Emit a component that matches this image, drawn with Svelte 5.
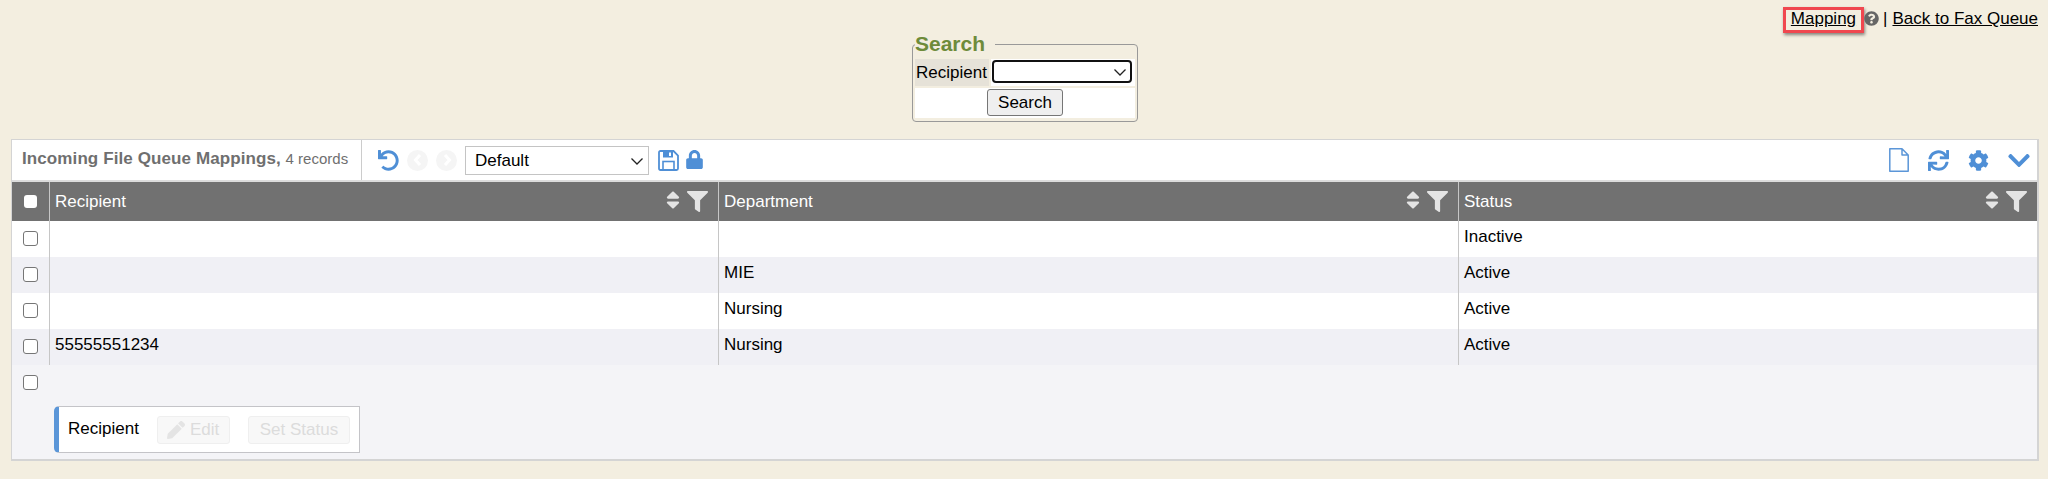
<script lang="ts">
  // Incoming file queue mappings grid
  const rows = [
    { recipient: '', department: '', status: 'Inactive' },
    { recipient: '', department: 'MIE', status: 'Active' },
    { recipient: '', department: 'Nursing', status: 'Active' },
    { recipient: '55555551234', department: 'Nursing', status: 'Active' },
  ];
  const columns = ['Recipient', 'Department', 'Status'];
</script>

<div class="page">
  <div class="top-links">
    <a class="mapping" href="#m">Mapping</a>
    <svg class="help" viewBox="0 0 512 512" width="15" height="15">
      <path fill="#666" d="M504 256c0 136.997-111.043 248-248 248S8 392.997 8 256C8 119.083 119.043 8 256 8s248 111.083 248 248zM262.655 90c-54.497 0-89.255 22.957-116.549 63.758-3.536 5.286-2.353 12.415 2.715 16.258l34.699 26.31c5.205 3.947 12.621 3.008 16.665-2.122 17.864-22.658 30.113-35.797 57.303-35.797 20.429 0 45.698 13.148 45.698 32.958 0 14.976-12.363 22.667-32.534 33.976C247.128 238.528 216 254.941 216 296v4c0 6.627 5.373 12 12 12h56c6.627 0 12-5.373 12-12v-1.333c0-28.462 83.186-29.647 83.186-106.667 0-58.002-60.165-102-116.531-102zM256 338c-25.365 0-46 20.635-46 46 0 25.364 20.635 46 46 46s46-20.636 46-46c0-25.365-20.635-46-46-46z" />
    </svg>
    <span class="sep">|</span>
    <a href="#b">Back to Fax Queue</a>
  </div>

  <div class="search-wrap">
    <fieldset class="search">
      <legend>Search</legend>
      <div class="search-row">
        <span class="label">Recipient</span>
        <span class="field">
          <span class="select-wrap">
            <select class="recipient"><option></option></select>
            <svg class="chevron" viewBox="0 0 12 7" width="12" height="7"><path d="M0.5 0.5 L6 6 L11.5 0.500" fill="none" stroke="#222" stroke-width="1.300" /></svg>
          </span>
        </span>
      </div>
      <div class="search-btn-row"><button>Search</button></div>
    </fieldset>
  </div>

  <div class="grid">
    <div class="toolbar">
      <div class="title"><b>Incoming File Queue Mappings,</b> <span>4 records</span></div>
      <div class="tools">
        <svg class="undo" viewBox="0 0 512 512" width="21" height="21">
          <path fill="#4f8fd6" d="M212.333 224.333H12c-6.627 0-12-5.373-12-12V12C0 5.373 5.373 0 12 0h48c6.627 0 12 5.373 12 12v78.112C117.773 39.279 184.26 7.47 258.175 8.007c136.906.994 246.448 111.623 246.157 248.532C504.041 393.258 393.12 504 256.333 504c-64.089 0-122.496-24.313-166.51-64.215-5.099-4.622-5.334-12.554-.467-17.42l33.967-33.967c4.474-4.474 11.662-4.717 16.401-.525C170.76 415.336 211.58 432 256.333 432c97.268 0 176-78.716 176-176 0-97.267-78.716-176-176-176-58.496 0-110.28 28.476-142.274 72.333h98.274c6.627 0 12 5.373 12 12v48c0 6.627-5.373 12-12 12z" />
        </svg>
        <span class="nav"><svg viewBox="0 0 20 20" width="20" height="20"><path d="M12 5 L7.500 10 L12 15" fill="none" stroke="#fff" stroke-width="3" /></svg></span>
        <span class="nav"><svg viewBox="0 0 20 20" width="20" height="20"><path d="M8 5 L12.500 10 L8 15" fill="none" stroke="#fff" stroke-width="3" /></svg></span>
        <span class="select-wrap view-wrap">
          <select class="view"><option>Default</option></select>
          <svg class="chevron" viewBox="0 0 12 7" width="12" height="7"><path d="M0.5 0.5 L6 6 L11.5 0.500" fill="none" stroke="#222" stroke-width="1.300" /></svg>
        </span>
        <svg class="save" viewBox="0 0 21 21" width="21" height="21">
          <path d="M1 2.500 Q1 1 2.500 1 H15.500 L20 5.500 V18.500 Q20 20 18.500 20 H2.500 Q1 20 1 18.500 Z" fill="none" stroke="#4f8fd6" stroke-width="1.800" />
          <rect x="5" y="1" width="10" height="6.500" fill="#4f8fd6" />
          <rect x="11" y="2.500" width="2" height="3.500" fill="#fff" />
          <rect x="5" y="11.500" width="11" height="8.500" fill="none" stroke="#4f8fd6" stroke-width="1.600" />
        </svg>
        <svg class="lock" viewBox="0 0 448 512" width="17" height="19">
          <path fill="#4f8fd6" d="M400 224h-24v-72C376 68.200 307.800 0 224 0S72 68.200 72 152v72H48c-26.500 0-48 21.500-48 48v192c0 26.500 21.500 48 48 48h352c26.500 0 48-21.500 48-48V272c0-26.500-21.500-48-48-48zm-104 0H152v-72c0-39.700 32.300-72 72-72s72 32.300 72 72v72z" />
        </svg>
      </div>
      <div class="right-tools">
        <svg viewBox="0 0 20 24" width="20" height="24">
          <path d="M0.800 0.800 H13 L19.200 7 V23.200 H0.800 Z M13 0.800 V7 H19.200" fill="none" stroke="#5b96d8" stroke-width="1.500" stroke-linejoin="round" />
        </svg>
        <svg viewBox="0 0 512 512" width="21" height="21">
          <path fill="#4f8fd6" d="M440.65 12.57l4 82.77A247.16 247.16 0 0 0 255.83 8C134.73 8 33.91 94.92 12.29 209.82A12 12 0 0 0 24.09 224h49.05a12 12 0 0 0 11.67-9.26 175.91 175.91 0 0 1 317-56.94l-101.46-4.86a12 12 0 0 0-12.57 12v47.41a12 12 0 0 0 12 12H500a12 12 0 0 0 12-12V12a12 12 0 0 0-12-12h-47.37a12 12 0 0 0-11.98 12.57zM255.83 432a175.61 175.61 0 0 1-146-77.8l101.8 4.87a12 12 0 0 0 12.57-12v-47.4a12 12 0 0 0-12-12H12a12 12 0 0 0-12 12V500a12 12 0 0 0 12 12h47.35a12 12 0 0 0 12-12.6l-4.15-82.57A247.17 247.17 0 0 0 255.83 504c121.11 0 221.93-86.92 243.55-201.82a12 12 0 0 0-11.8-14.18h-49.05a12 12 0 0 0-11.67 9.26A175.86 175.86 0 0 1 255.83 432z" />
        </svg>
        <svg viewBox="0 0 512 512" width="21" height="21">
          <path fill="#4f8fd6" d="M487.4 315.7l-42.6-24.6c4.3-23.2 4.3-47 0-70.2l42.6-24.6c4.9-2.8 7.1-8.6 5.5-14-11.1-35.6-30-67.8-54.7-94.6-3.8-4.1-10-5.1-14.8-2.3L380.800 110c-17.900-15.400-38.500-27.300-60.800-35.100V25.800c0-5.600-3.900-10.500-9.400-11.700-36.700-8.200-74.300-7.800-109.200 0-5.500 1.200-9.400 6.100-9.400 11.700V75c-22.200 7.900-42.800 19.800-60.800 35.100L88.700 85.500c-4.900-2.800-11-1.900-14.800 2.300-24.700 26.700-43.600 58.900-54.700 94.600-1.700 5.400.6 11.200 5.500 14L67.300 221c-4.300 23.200-4.300 47 0 70.200l-42.600 24.600c-4.900 2.800-7.100 8.600-5.500 14 11.100 35.600 30 67.800 54.700 94.600 3.800 4.100 10 5.100 14.800 2.300l42.600-24.600c17.900 15.400 38.500 27.300 60.800 35.100v49.200c0 5.600 3.900 10.500 9.400 11.700 36.700 8.200 74.300 7.800 109.200 0 5.500-1.200 9.400-6.100 9.400-11.700v-49.200c22.200-7.900 42.800-19.800 60.800-35.100l42.600 24.600c4.900 2.800 11 1.900 14.800-2.300 24.700-26.700 43.600-58.900 54.700-94.600 1.500-5.500-.7-11.300-5.600-14.100zM256 336c-44.100 0-80-35.900-80-80s35.900-80 80-80 80 35.900 80 80-35.900 80-80 80z" />
        </svg>
        <svg viewBox="0 0 448 512" width="22" height="25">
          <path fill="#4f8fd6" d="M207.029 381.476L12.686 187.132c-9.373-9.373-9.373-24.569 0-33.941l22.667-22.667c9.357-9.357 24.522-9.375 33.901-.04L224 284.505l154.745-154.021c9.379-9.335 24.544-9.317 33.901.04l22.667 22.667c9.373 9.373 9.373 24.569 0 33.941L240.971 381.476c-9.373 9.372-24.569 9.372-33.942 0z" />
        </svg>
      </div>
    </div>

    <div class="row head">
      <div class="check"><span class="box head-box"></span></div>
      {#each columns as col}
        <div class="cell">
          <span class="cell-text">{col}</span>
          <svg class="sort" viewBox="0 0 320 512" width="14" height="22">
            <path fill="#e4e4e4" d="M41 288h238c21.400 0 32.100 25.900 17 41L177 448c-9.400 9.400-24.600 9.400-33.900 0L24 329c-15.100-15.100-4.400-41 17-41zm255-105L177 64c-9.400-9.400-24.600-9.400-33.900 0L24 183c-15.100 15.100-4.400 41 17 41h238c21.400 0 32.100-25.900 17-41z" />
          </svg>
          <svg class="filter" viewBox="0 0 512 512" width="21" height="21">
            <path fill="#e4e4e4" d="M487.976 0H24.028C2.710 0-8.047 25.866 7.058 40.971L192 225.941V432c0 7.831 3.821 15.170 10.237 19.662l80 55.980C298.020 518.690 320 507.493 320 487.980V225.941l184.947-184.970C520.021 25.896 509.338 0 487.976 0z" />
          </svg>
        </div>
      {/each}
    </div>

    {#each rows as row, i}
      <div class="row body" class:alt={i % 2 === 1}>
        <div class="check"><span class="box"></span></div>
        <div class="cell"><span class="cell-text">{row.recipient}</span></div>
        <div class="cell"><span class="cell-text">{row.department}</span></div>
        <div class="cell"><span class="cell-text">{row.status}</span></div>
      </div>
    {/each}

    <div class="footer">
      <div class="check foot-check"><span class="box"></span></div>
      <div class="actions">
        <span class="action-label">Recipient</span>
        <span class="action-btn edit">
          <svg viewBox="0 0 512 512" width="18" height="18">
            <path fill="#e4e4e4" d="M497.900 142.100l-46.100 46.100c-4.700 4.700-12.300 4.700-17 0l-111-111c-4.700-4.700-4.700-12.300 0-17l46.100-46.100c18.700-18.700 49.100-18.700 67.900 0l60.100 60.100c18.800 18.700 18.800 49.100 0 67.900zM284.200 99.800L21.600 362.400.4 483.900c-2.900 16.400 11.400 30.600 27.800 27.800l121.500-21.300 262.600-262.600c4.700-4.700 4.700-12.300 0-17l-111-111c-4.800-4.700-12.400-4.700-17.100 0z" />
          </svg>
          Edit
        </span>
        <span class="action-btn status">Set Status</span>
      </div>
    </div>
  </div>
</div>

<style>
  :global(body) {
    background: #f3eee0;
  }

  .page {
    height: 479px;
    font-family: "Liberation Sans", Arial, sans-serif;
    font-size: 17px;
    color: #000;
    overflow: hidden;
  }

  .top-links {
    display: flex;
    justify-content: flex-end;
    align-items: center;
    height: 40px;
    padding-right: 10px;
    margin-bottom: -8px;
    position: relative;
  }

  .top-links a {
    color: #000;
    position: relative;
    top: -1px;
  }

  .top-links .mapping {
    top: 0;
    padding: 0 8px;
    height: 26px;
    box-sizing: border-box;
    line-height: 24px;
    outline: 3px solid #f0474f;
    outline-offset: -3px;
    box-shadow: 1px 2px 3px rgba(0, 0, 0, 0.45);
  }

  .help {
    margin: 0 4px 0 0;
    position: relative;
    top: -2px;
  }

  .sep {
    margin-right: 5px;
    position: relative;
    top: -1px;
  }

  .search-wrap {
    display: flex;
    justify-content: center;
    height: 107px;
    padding-left: 2px;
  }

  .search {
    margin: 0;
    padding: 0 2px;
    width: 226px;
    height: 90px;
    box-sizing: border-box;
    border: 1px solid #999;
    border-radius: 4px;
  }

  .search legend {
    padding: 0 10px 0 0;
    font-size: 21px;
    font-weight: bold;
    line-height: 24px;
    color: #6e8b3a;
  }

  .search-row {
    display: flex;
    gap: 2px;
    height: 27px;
    margin-top: 3px;
  }

  .label {
    display: flex;
    align-items: center;
    padding-left: 1px;
    box-sizing: border-box;
    background: #e6e2d8;
    width: 74px;
    white-space: nowrap;
  }

  .field {
    flex: 1;
    background: #fff;
    display: flex;
    padding: 1px 0 0 1px;
  }

  .select-wrap {
    position: relative;
    display: block;
  }

  .chevron {
    position: absolute;
    right: 6px;
    top: 9px;
    pointer-events: none;
  }

  select {
    appearance: none;
    display: block;
    box-sizing: border-box;
    background: #fff;
    font: inherit;
    color: #000;
    margin: 0;
  }

  .recipient {
    width: 140px;
    height: 23px;
    border: 2px solid #111;
    border-radius: 4px;
  }

  .search-btn-row {
    background: #fff;
    margin-top: 2px;
    height: 30px;
    display: flex;
    justify-content: center;
    padding-top: 1px;
    box-sizing: border-box;
  }

  .search-btn-row button {
    width: 76px;
    height: 27px;
    font: inherit;
    padding: 0;
    background: #efefef;
    border: 1px solid #767676;
    border-radius: 3px;
    color: #000;
  }

  .grid {
    margin: 0 9px 0 11px;
    border: 2px solid #d4d4d4;
    border-width: 1px 2px 2px 1px;
    background: #f4f4f7;
    height: 322px;
    box-sizing: border-box;
  }

  .toolbar {
    display: flex;
    align-items: center;
    background: #fff;
    height: 42px;
    box-sizing: border-box;
    border-bottom: 2px solid #dcdcdc;
  }

  .title {
    width: 350px;
    height: 100%;
    box-sizing: border-box;
    padding-left: 10px;
    border-right: 1px solid #ccc;
    color: #6f6f6f;
    line-height: 38px;
    white-space: nowrap;
  }

  .title b {
    letter-spacing: 0.1px;
  }

  .title span {
    font-size: 15px;
  }

  .tools {
    display: flex;
    align-items: center;
    padding-left: 16px;
    height: 100%;
  }

  .undo {
    margin-right: 8px;
  }

  .nav {
    width: 21px;
    height: 21px;
    border-radius: 50%;
    background: #f5f5f5;
    margin-right: 8px;
    display: flex;
    align-items: center;
    justify-content: center;
  }

  .view-wrap {
    margin-right: 9px;
  }

  .view-wrap .chevron {
    top: 12px;
  }

  .view {
    width: 184px;
    height: 29px;
    border: 1px solid #c4c4c4;
    padding-left: 9px;
  }

  .lock {
    margin: 0 0 2px 7px;
  }

  .right-tools {
    margin-left: auto;
    display: flex;
    align-items: center;
    gap: 19px;
    padding-right: 7px;
  }

  .row {
    display: grid;
    grid-template-columns: 37px 669px 740px 1fr;
  }

  .head {
    background: #717171;
    color: #fff;
    height: 39px;
  }

  .body {
    height: 36px;
    background: #fff;
  }

  .body.alt {
    background: #f0f0f5;
  }

  .check {
    display: flex;
    align-items: center;
    justify-content: center;
  }

  .box {
    display: block;
    width: 15px;
    height: 15px;
    box-sizing: border-box;
    border: 1px solid #767676;
    border-radius: 3px;
    background: #fff;
    margin: 0 1px 1px 0;
  }

  .head-box {
    border: none;
    width: 13px;
    height: 13px;
  }

  .cell {
    display: flex;
    align-items: center;
    border-left: 1px solid #c6c6c6;
    padding-left: 5px;
    min-width: 0;
  }

  .cell-text {
    flex: 1;
  }

  .body .cell-text {
    position: relative;
    top: -2px;
  }

  .sort {
    margin: 0 7px 4px 0;
  }

  .filter {
    margin-right: 10px;
  }

  .foot-check {
    width: 37px;
    height: 36px;
  }

  .actions {
    display: flex;
    align-items: center;
    box-sizing: border-box;
    width: 306px;
    height: 47px;
    margin: 5px 0 0 42px;
    background: #fff;
    border: 1px solid #c4c4c8;
    border-left: 5px solid #5b96d8;
    border-radius: 5px 0 0 5px;
    padding-left: 9px;
  }

  .action-label {
    width: 89px;
    position: relative;
    top: -1px;
  }

  .action-btn {
    display: flex;
    align-items: center;
    box-sizing: border-box;
    height: 28px;
    border: 1px solid #efefef;
    border-radius: 3px;
    background: #f8f8f8;
    color: #dcdcdc;
    white-space: nowrap;
  }

  .edit {
    width: 73px;
    gap: 5px;
    padding-left: 9px;
    margin-right: 18px;
  }

  .status {
    width: 102px;
    justify-content: center;
  }
</style>
